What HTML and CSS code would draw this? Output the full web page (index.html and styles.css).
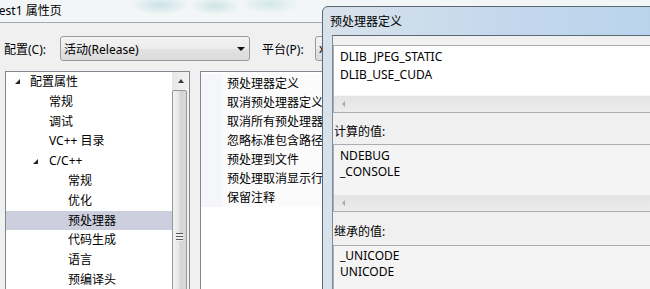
FILE: index.html
```html
<!DOCTYPE html>
<html lang="zh-CN">
<head>
    <meta charset="UTF-8">
    <title>Test1 属性页</title>
    <link rel="stylesheet" href="styles.css">
</head>
<body>
    <div class="window">
        <!-- barra de título da janela de trás -->
        <div class="titlebar"><span class="title">Test1 属性页</span></div>

        <div class="toolbar">
            <span class="lbl lbl-config">配置(C):</span>
            <div class="combo combo-config">
                <span>活动(Release)</span>
                <span class="drop"></span>
            </div>
            <span class="lbl lbl-platform">平台(P):</span>
            <div class="combo combo-platform"><span>x64</span></div>
        </div>

        <div class="panels">
            <!-- árvore de configurações -->
            <div class="tree">
                <ul class="tree-items">
                    <li class="lv0"><span class="twisty"></span>配置属性</li>
                    <li class="lv1">常规</li>
                    <li class="lv1">调试</li>
                    <li class="lv1">VC++ 目录</li>
                    <li class="lv1"><span class="twisty"></span>C/C++</li>
                    <li class="lv2">常规</li>
                    <li class="lv2">优化</li>
                    <li class="lv2 selected">预处理器</li>
                    <li class="lv2">代码生成</li>
                    <li class="lv2">语言</li>
                    <li class="lv2">预编译头</li>
                </ul>
                <div class="vscroll">
                    <div class="up"><span class="up-arrow"></span></div>
                    <div class="thumb"><span class="grip"></span></div>
                </div>
            </div>

            <!-- grade de propriedades -->
            <div class="props">
                <div class="prop">预处理器定义</div>
                <div class="prop">取消预处理器定义</div>
                <div class="prop">取消所有预处理器定义</div>
                <div class="prop">忽略标准包含路径</div>
                <div class="prop">预处理到文件</div>
                <div class="prop">预处理取消显示行号</div>
                <div class="prop">保留注释</div>
            </div>
        </div>
    </div>

    <!-- diálogo por cima -->
    <div class="dialog">
        <div class="dialog-title">预处理器定义</div>
        <div class="dialog-client">
            <div class="field field-edit">
                <div class="field-text">
                    <div>DLIB_JPEG_STATIC</div>
                    <div>DLIB_USE_CUDA</div>
                </div>
                <div class="hscroll"><span class="left-arrow"></span></div>
            </div>

            <div class="field-label lbl-calc">计算的值:</div>
            <div class="field field-ro">
                <div class="field-text">
                    <div>NDEBUG</div>
                    <div>_CONSOLE</div>
                </div>
                <div class="hscroll"><span class="left-arrow"></span></div>
            </div>

            <div class="field-label lbl-inherit">继承的值:</div>
            <div class="field field-ro field-last">
                <div class="field-text">
                    <div>_UNICODE</div>
                    <div>UNICODE</div>
                </div>
            </div>
        </div>
    </div>
</body>
</html>
```

FILE: styles.css
```css
/* Janela de propriedades estilo Windows 7 */
* {
    box-sizing: border-box;
}
html, body {
    margin: 0;
    padding: 0;
}
body {
    width: 650px;
    height: 289px;
    overflow: hidden;
    position: relative;
    font-family: "Noto Sans", "Noto Sans CJK SC", sans-serif;
    font-size: 12px;
    color: #000;
    background-color: #f0f0f0;
}
.window {
    height: 289px;
}
.titlebar {
    height: 23px;
    line-height: 21px;
    border-bottom: 1px solid #a3abb1;
    white-space: nowrap;
    overflow: hidden;
    background:
        radial-gradient(ellipse 30px 10px at 160px 5px, rgba(110, 185, 195, 0.3), transparent),
        radial-gradient(ellipse 25px 9px at 215px 6px, rgba(90, 170, 180, 0.25), transparent),
        radial-gradient(ellipse 30px 10px at 270px 4px, rgba(110, 185, 195, 0.25), transparent),
        #f3f6f7;
}
.title {
    display: inline-block;
    margin-left: -7px;
}
.toolbar {
    display: flex;
    align-items: center;
    height: 25px;
    margin-top: 13px;
    padding-left: 4px;
    white-space: nowrap;
}
.lbl {
    flex-shrink: 0;
}
.lbl-config {
    width: 56px;
}
.lbl-platform {
    width: 53px;
    margin-left: 12px;
}
.combo {
    flex-shrink: 0;
    height: 25px;
    display: flex;
    align-items: center;
    padding-left: 3px;
    border: 1px solid #9a9a9a;
    border-radius: 3px;
    background: linear-gradient(#f3f3f3, #ececec 50%, #e2e2e2 51%, #dcdcdc);
}
.combo-config {
    width: 190px;
}
.combo-config span:first-child {
    flex: 1;
}
.combo-platform {
    width: 100px;
}
.drop {
    width: 0;
    height: 0;
    margin-right: 4px;
    border-left: 4px solid transparent;
    border-right: 4px solid transparent;
    border-top: 4px solid #111;
}
.panels {
    display: flex;
    gap: 10px;
    margin-top: 10px;
    padding-left: 5px;
}
.tree {
    flex-shrink: 0;
    width: 185px;
    height: 240px;
    display: flex;
    border: 1px solid #828790;
    background-color: #fff;
}
.tree-items {
    flex: 1;
    list-style: none;
    margin: 0;
    padding: 0;
}
.tree-items li {
    height: 19.8px;
    line-height: 19.8px;
    display: flex;
    align-items: center;
    white-space: nowrap;
}
.lv0 {
    padding-left: 24px;
}
.lv1 {
    padding-left: 43px;
}
.lv2 {
    padding-left: 62px;
}
.twisty {
    width: 0;
    height: 0;
    border-right: 5px solid #262626;
    border-top: 5px solid transparent;
    margin-left: -15px;
    margin-right: 10px;
}
.lv1 .twisty {
    margin-left: -16px;
    margin-right: 11px;
}
.tree-items .selected {
    background-color: #cdcfdf;
}
.vscroll {
    width: 17px;
    display: flex;
    flex-direction: column;
    background: linear-gradient(to right, #e7e7e7, #f3f3f3);
}
.up {
    height: 18px;
    display: flex;
    align-items: center;
    justify-content: center;
}
.up-arrow {
    width: 0;
    height: 0;
    border-left: 3px solid transparent;
    border-right: 3px solid transparent;
    border-bottom: 4px solid #3c3c3c;
}
.thumb {
    flex: 1;
    margin-right: 2px;
    padding-top: 142px;
    border: 1px solid #979797;
    border-radius: 2px;
    background: linear-gradient(to right, #f2f2f2, #e6e6e6 45%, #d4d4d4 55%, #dadada);
    display: flex;
    justify-content: center;
}
.grip {
    width: 7px;
    height: 8px;
    background: repeating-linear-gradient(#5a5a5a 0, #5a5a5a 1px, #f0f0f0 1px, #f0f0f0 3px);
}
/* a grade fica cortada pela borda do diálogo */
.props {
    flex-shrink: 0;
    width: 123px;
    height: 240px;
    padding-top: 2px;
    overflow: hidden;
    border: 1px solid #828790;
    background-color: #fff;
}
.prop {
    height: 19px;
    line-height: 19px;
    padding-left: 26px;
    white-space: nowrap;
    overflow: hidden;
    background: linear-gradient(to right, #f4f6f9 21px, #fbfbfb 21px);
}
.dialog {
    position: absolute;
    left: 322px;
    top: 6px;
    width: 400px;
    height: 320px;
    display: flex;
    flex-direction: column;
    border: 1px solid #5b6876;
    border-radius: 6px 0 0 0;
    background: linear-gradient(to right, #d8e2eb, #c4d8ec 45%, #b6d1ee);
}
.dialog-title {
    flex-shrink: 0;
    height: 28px;
    line-height: 30px;
    padding-left: 7px;
    white-space: nowrap;
}
.dialog-client {
    flex: 1;
    margin-left: 9px;
    padding-top: 9px;
    border-left: 1px solid #7d8b99;
    border-top: 1px solid #5b6876;
    background-color: #f0f0f0;
}
.field {
    height: 68px;
    display: flex;
    flex-direction: column;
    border: 1px solid #abadb3;
}
.field-edit {
    background-color: #fff;
}
.field-edit .field-text {
    padding-top: 2px;
    line-height: 18px;
}
.field-ro {
    background-color: #f4f4f4;
}
.field-ro .field-text {
    padding-top: 3px;
    line-height: 16px;
}
.field-last {
    height: 80px;
}
.field-last .field-text {
    padding-top: 2px;
}
.field-text {
    flex: 1;
    padding-left: 6px;
    white-space: nowrap;
}
.hscroll {
    flex-shrink: 0;
    height: 17px;
    display: flex;
    align-items: center;
    padding-left: 8px;
    border-top: 1px solid #f7f7f7;
    background: linear-gradient(#e4e4e4, #ececec);
}
.left-arrow {
    width: 0;
    height: 0;
    border-top: 3px solid transparent;
    border-bottom: 3px solid transparent;
    border-right: 3px solid #a8a8a8;
}
.field-label {
    line-height: 16px;
    padding-left: 1px;
}
.lbl-calc {
    padding-top: 11px;
    padding-bottom: 4px;
}
.lbl-inherit {
    padding-top: 12px;
    padding-bottom: 5px;
}
```
